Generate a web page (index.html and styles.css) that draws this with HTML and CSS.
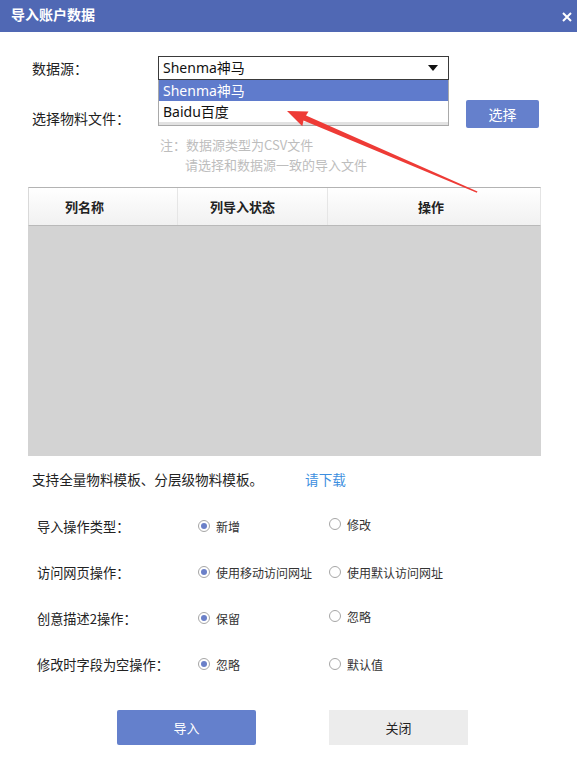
FILE: index.html
```html
<!DOCTYPE html>
<html lang="zh-CN">
<head>
<meta charset="utf-8">
<title>导入账户数据</title>
<link rel="stylesheet" href="styles.css">
</head>
<body>
<div class="dialog">
  <div class="titlebar">
    <span class="title">导入账户数据</span>
    <svg class="close" width="10" height="10" viewBox="0 0 10 10"><path d="M1 1L9 9M9 1L1 9" stroke="#fff" stroke-width="2" fill="none"/></svg>
  </div>

  <div class="row-source">
    <span class="label">数据源<span class="colon">：</span></span>
    <div class="select">
      <span class="select-text">Shenma神马</span>
      <svg class="caret" width="10" height="6" viewBox="0 0 10 6"><path d="M0 0H10L5 6Z" fill="#111"/></svg>
      <ul class="options">
        <li class="opt active">Shenma神马</li>
        <li class="opt">Baidu百度</li>
        <li class="opt-cut"></li>
      </ul>
    </div>
  </div>

  <div class="row-file">
    <span class="label label-file">选择物料文件<span class="colon">：</span></span>
    <div class="file-field"></div>
    <button class="btn-choose">选择</button>
  </div>

  <div class="notes">
    <p class="note1">注<span class="colon">：</span>数据源类型为CSV文件</p>
    <p class="note2">请选择和数据源一致的导入文件</p>
  </div>

  <div class="table">
    <div class="thead">
      <div class="th th1">列名称</div>
      <div class="th th2">列导入状态</div>
      <div class="th th3">操作</div>
    </div>
    <div class="tbody"></div>
  </div>

  <div class="support">支持全量物料模板、分层级物料模板。<a class="download">请下载</a></div>

  <div class="options-block">
    <div class="radio-row">
      <span class="rlabel">导入操作类型<span class="colon">：</span></span>
      <span class="ropt"><i class="radio checked"></i>新增</span>
      <span class="ropt up"><i class="radio"></i>修改</span>
    </div>
    <div class="radio-row">
      <span class="rlabel">访问网页操作<span class="colon">：</span></span>
      <span class="ropt"><i class="radio checked"></i>使用移动访问网址</span>
      <span class="ropt"><i class="radio"></i>使用默认访问网址</span>
    </div>
    <div class="radio-row">
      <span class="rlabel">创意描述2操作<span class="colon">：</span></span>
      <span class="ropt"><i class="radio checked"></i>保留</span>
      <span class="ropt up"><i class="radio"></i>忽略</span>
    </div>
    <div class="radio-row">
      <span class="rlabel">修改时字段为空操作<span class="colon">：</span></span>
      <span class="ropt"><i class="radio checked"></i>忽略</span>
      <span class="ropt"><i class="radio"></i>默认值</span>
    </div>
  </div>

  <div class="actions">
    <button class="btn btn-primary">导入</button>
    <button class="btn btn-default">关闭</button>
  </div>

  <svg class="annot" width="577" height="761" viewBox="0 0 577 761">
    <polygon fill="#ee3b36" points="287,111 308.5,111.4 306,115.5 477.5,191.5 476.8,192.8 303.5,120.5 302.3,126.2"/>
  </svg>
</div>
</body>
</html>
```

FILE: styles.css
```css
* { box-sizing: border-box; }
html, body { margin: 0; padding: 0; background: #fff; }
body {
  font-family: "Noto Sans", "Noto Sans CJK SC", sans-serif;
  color: #222;
  font-size: 13px;
}
.dialog {
  position: relative;
  width: 577px;
  height: 761px;
  overflow: hidden;
}
.colon { font-family: "Noto Sans CJK TC", sans-serif; }
.titlebar {
  height: 32px;
  background: #5068b4;
  display: flex;
  align-items: center;
  justify-content: space-between;
  padding: 0 5px 0 11px;
}
.title {
  color: #fff;
  font-family: "Noto Sans CJK SC", sans-serif;
  font-size: 14px;
  font-weight: 700;
  line-height: 20px;
  margin-top: -4px;
}
.close { margin-top: 1px; }

.row-source {
  margin-top: 24px;
  height: 24px;
  display: flex;
  align-items: center;
}
.label {
  width: 158px;
  padding-left: 32px;
  font-family: "Noto Sans CJK SC", sans-serif;
  font-size: 14px;
  line-height: 20px;
  color: #222;
}
.select {
  position: relative;
  width: 291px;
  height: 24px;
  border: 1px solid #3a3a3a;
  display: flex;
  align-items: center;
  justify-content: space-between;
  padding: 0 10px 0 4px;
  background: #fff;
}
.select-text {
  font-size: 14px;
  line-height: 20px;
  color: #111;
}
.options {
  position: absolute;
  left: -1px;
  top: 23px;
  width: 291px;
  margin: 0;
  padding: 0;
  list-style: none;
  background: #fff;
  border: 1px solid #a9a9a9;
  border-top: none;
  z-index: 2;
}
.opt {
  height: 21px;
  line-height: 21px;
  padding-left: 4px;
  font-size: 14px;
  color: #111;
}
.opt.active {
  background: #5f7bcc;
  color: #fff;
}
.opt-cut {
  height: 3px;
  background: #e2e2e2;
}

.row-file {
  margin-top: 20px;
  height: 28px;
  display: flex;
  align-items: center;
}
.label-file { padding-top: 7px; }
.file-field {
  width: 291px;
  height: 20px;
}
.btn-choose {
  margin-left: 17px;
  width: 73px;
  height: 28px;
  border: none;
  border-radius: 2px;
  background: #6580cc;
  color: #fff;
  font-family: "Noto Sans CJK SC", sans-serif;
  font-size: 14px;
  padding: 0;
}

.notes {
  margin-top: 7px;
  color: #bdbdbd;
  font-family: "Noto Sans CJK SC", sans-serif;
  font-size: 13px;
  line-height: 20px;
}
.notes p { margin: 0; }
.note1 { padding-left: 160px; }
.note2 { padding-left: 185px; }

.table {
  margin: 12px 0 0 28px;
  width: 513px;
}
.thead {
  display: flex;
  height: 39px;
  border-top: 1px solid #b3b3b3;
  border-left: 1px solid #d9d9d9;
  border-right: 1px solid #e4e4e4;
  border-bottom: 1px solid #b9b9b9;
  background: linear-gradient(#ffffff, #f1f1f1);
}
.th {
  font-family: "Noto Sans CJK SC", sans-serif;
  font-weight: 700;
  font-size: 13px;
  line-height: 37px;
  color: #222;
}
.th1 { width: 149px; padding-left: 36px; border-right: 1px solid #e6e6e6; }
.th2 { width: 150px; padding-left: 32px; border-right: 1px solid #e6e6e6; }
.th3 { flex: 1; text-align: center; padding-right: 6px; }
.tbody {
  height: 230px;
  background: #d3d3d3;
}

.support {
  height: 46px;
  line-height: 46px;
  padding-left: 32px;
  font-family: "Noto Sans CJK SC", sans-serif;
  font-size: 13.6px;
  color: #222;
}
.download {
  margin-left: 42px;
  color: #3d8fe0;
  cursor: pointer;
}

.options-block {
  padding-top: 12px;
  display: flex;
  flex-direction: column;
  gap: 22px;
}
.radio-row {
  height: 24px;
  display: flex;
  align-items: center;
  font-family: "Noto Sans CJK SC", sans-serif;
}
.rlabel {
  width: 198px;
  padding-left: 37px;
  font-size: 13.2px;
  color: #222;
}
.ropt {
  width: 131px;
  display: flex;
  align-items: center;
  font-size: 12px;
  color: #333;
}
.ropt.up { margin-bottom: 4px; }
.radio {
  width: 12px;
  height: 12px;
  border-radius: 50%;
  border: 1px solid #a6a6a6;
  background: #fff;
  margin-right: 6px;
  display: flex;
  align-items: center;
  justify-content: center;
}
.radio.checked::after {
  content: "";
  width: 6px;
  height: 6px;
  border-radius: 50%;
  background: #6b80c8;
}

.actions {
  margin-top: 34px;
  padding-left: 117px;
  display: flex;
  gap: 73px;
}
.btn {
  width: 139px;
  height: 35px;
  border: none;
  padding: 0;
  font-family: "Noto Sans CJK SC", sans-serif;
  font-size: 13px;
}
.btn-primary {
  background: #6480cc;
  color: #fff;
  border-radius: 2px;
}
.btn-default {
  background: #ececec;
  color: #222;
}

.annot {
  position: absolute;
  left: 0;
  top: 0;
  pointer-events: none;
  z-index: 5;
}
```
